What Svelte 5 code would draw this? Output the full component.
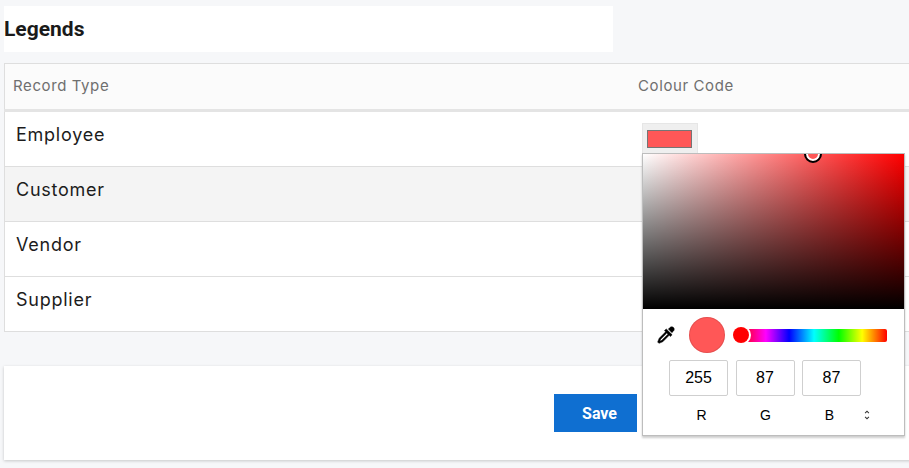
<script>
    const records = ["Employee", "Customer", "Vendor", "Supplier"];
    const rgb = [
        { label: "R", value: 255 },
        { label: "G", value: 87 },
        { label: "B", value: 87 },
    ];
</script>

<main class="page">
    <div class="title"><h2>Legends</h2></div>

    <table>
        <thead>
            <tr>
                <th class="first">Record Type</th>
                <th>Colour Code</th>
            </tr>
        </thead>
        <tbody>
            {#each records as record, i}
                <tr class:striped={i === 1}>
                    <td class="first">{record}</td>
                    <td class="colour">
                        {#if i === 0}
                            <div class="swatch-wrap"><div class="swatch"></div></div>
                            <div class="picker">
                                <div class="saturation">
                                    <div class="handle"></div>
                                </div>
                                <div class="controls">
                                    <div class="hue-row">
                                        <svg class="dropper" viewBox="0 0 24 24" aria-hidden="true">
                                            <path d="M19.35,11.72L17.22,13.85L15.81,12.43L8.1,20.14L3.5,22L2,20.5L3.86,15.9L11.57,8.19L10.15,6.78L12.28,4.65L19.35,11.72M16.76,3C17.93,1.83 19.83,1.83 21,3C22.17,4.17 22.17,6.07 21,7.24L19.08,9.16L14.84,4.92L16.76,3M5.56,17.03L4.5,19.5L6.97,18.44L14.4,11L13,9.6L5.56,17.03Z" />
                                        </svg>
                                        <div class="current"></div>
                                        <div class="hue"><div class="hue-thumb"></div></div>
                                    </div>
                                    <div class="inputs">
                                        {#each rgb as c}
                                            <input type="text" value={c.value} />
                                        {/each}
                                    </div>
                                    <div class="labels">
                                        {#each rgb as c}
                                            <span>{c.label}</span>
                                        {/each}
                                        <svg class="toggle" viewBox="0 0 24 24" aria-hidden="true">
                                            <path d="M12,18.17L8.83,15L7.41,16.41L12,21L16.59,16.41L15.17,15M12,5.83L15.17,9L16.58,7.59L12,3L7.41,7.59L8.83,9L12,5.83Z" />
                                        </svg>
                                    </div>
                                </div>
                            </div>
                        {/if}
                    </td>
                </tr>
            {/each}
        </tbody>
    </table>

    <div class="footer">
        <button>Save</button>
    </div>
</main>

<style>
    :global(body) {
        background: #f6f7f9;
        overflow: hidden;
    }

    .page {
        width: 1040px;
        height: 468px;
        padding: 6px 0 0 4px;
        box-sizing: border-box;
        font-family: Inter, "Liberation Sans", sans-serif;
    }

    .title {
        width: 609px;
        height: 46px;
        background: #fff;
        display: flex;
        align-items: center;
    }

    h2 {
        margin: 0;
        font-family: Roboto, sans-serif;
        font-size: 21px;
        font-weight: 700;
        color: #1a1a1a;
    }

    table {
        width: 100%;
        margin-top: 11px;
        border-collapse: collapse;
        table-layout: fixed;
        background: #fff;
        border: 1px solid #dedede;
    }

    th {
        height: 43px;
        padding: 0 0 2px 8px;
        background: #fbfbfb;
        border-bottom: 3px solid #e4e4e4;
        text-align: left;
        font-size: 15px;
        font-weight: 400;
        letter-spacing: 0.6px;
        color: #6f6f6f;
    }

    th.first {
        width: 617px;
    }

    td {
        height: 54px;
        padding: 0;
        border-top: 1px solid #dedede;
        vertical-align: top;
        font-size: 18px;
        letter-spacing: 0.75px;
        color: #1c1c1c;
    }

    td.first {
        padding: 12px 0 0 11px;
        box-sizing: border-box;
    }

    .striped td {
        background: #f4f4f4;
    }

    .colour {
        position: relative;
    }

    .swatch-wrap {
        height: 18px;
        margin: 11px 0 0 12px;
        padding: 6px 5px 6px 4px;
        background: #efefef;
        border: 1px solid #e6e6e6;
        border-bottom: 0;
        box-sizing: content-box;
        width: 45px;
    }

    .swatch {
        height: 100%;
        background: #ff5757;
        border: 1.5px solid #757575;
        box-sizing: border-box;
    }

    .picker {
        position: absolute;
        top: 41px;
        left: 12px;
        width: 263px;
        height: 283px;
        background: #fff;
        border: 1px solid #bdbdbd;
        box-sizing: border-box;
        box-shadow: 0 2px 2px rgba(0, 0, 0, 0.2);
        z-index: 2;
    }

    .saturation {
        position: relative;
        height: 155px;
        overflow: hidden;
        background:
            linear-gradient(to top, #000, transparent),
            linear-gradient(to right, #fff, #f00);
    }

    .handle {
        position: absolute;
        left: 161px;
        top: -9px;
        width: 18px;
        height: 18px;
        box-sizing: border-box;
        border: 2px solid #000;
        border-radius: 50%;
        background: #ff5757;
        box-shadow: inset 0 0 0 2px #fff;
    }

    .controls {
        padding: 8px 17px 0 13px;
    }

    .hue-row {
        display: flex;
        align-items: center;
        height: 36px;
    }

    .dropper {
        width: 20px;
        height: 20px;
        fill: #000;
        stroke: #000;
        stroke-width: 0.6;
    }

    .current {
        width: 36px;
        height: 36px;
        margin-left: 13px;
        border-radius: 50%;
        background: #ff5757;
        box-shadow: inset 0 0 0 1px rgba(0, 0, 0, 0.1);
    }

    .hue {
        position: relative;
        flex: 1;
        height: 13px;
        margin-left: 16px;
        border-radius: 2px;
        background: linear-gradient(to right, #f00, #f0f 17%, #00f 33%, #0ff 50%, #0f0 67%, #ff0 83%, #f00);
    }

    .hue-thumb {
        position: absolute;
        left: -8px;
        top: -1.5px;
        width: 16px;
        height: 16px;
        border-radius: 50%;
        background: #f00;
        box-shadow: 0 0 0 2px #fff;
    }

    .inputs {
        display: flex;
        gap: 7.5px;
        margin: 7px 0 0 13px;
    }

    input {
        width: 59px;
        height: 36px;
        padding: 0;
        box-sizing: border-box;
        border: 1px solid #cfcfcf;
        border-radius: 2px;
        text-align: center;
        font-family: "Liberation Sans", sans-serif;
        font-size: 16px;
        letter-spacing: 0;
        color: #000;
    }

    .labels {
        position: relative;
        display: grid;
        grid-template-columns: repeat(3, 64px);
        margin: 11px 0 0 11px;
        font-family: "Liberation Sans", sans-serif;
        font-size: 14px;
        letter-spacing: 0;
        line-height: 16px;
        color: #000;
    }

    .labels span {
        text-align: center;
        padding-left: 5px;
    }

    .toggle {
        position: absolute;
        left: 194px;
        top: 2px;
        width: 12px;
        height: 12px;
        fill: #333;
    }

    .footer {
        height: 94px;
        margin-top: 34px;
        background: #fff;
        box-shadow: 0 1px 3px rgba(0, 0, 0, 0.2);
        padding: 28px 0 0 550px;
        box-sizing: border-box;
    }

    button {
        display: block;
        width: 83px;
        height: 38px;
        padding: 0 0 0 8px;
        border: none;
        background: #0f6fd1;
        color: #fff;
        font-family: Roboto, sans-serif;
        font-size: 16px;
        font-weight: 700;
    }
</style>
